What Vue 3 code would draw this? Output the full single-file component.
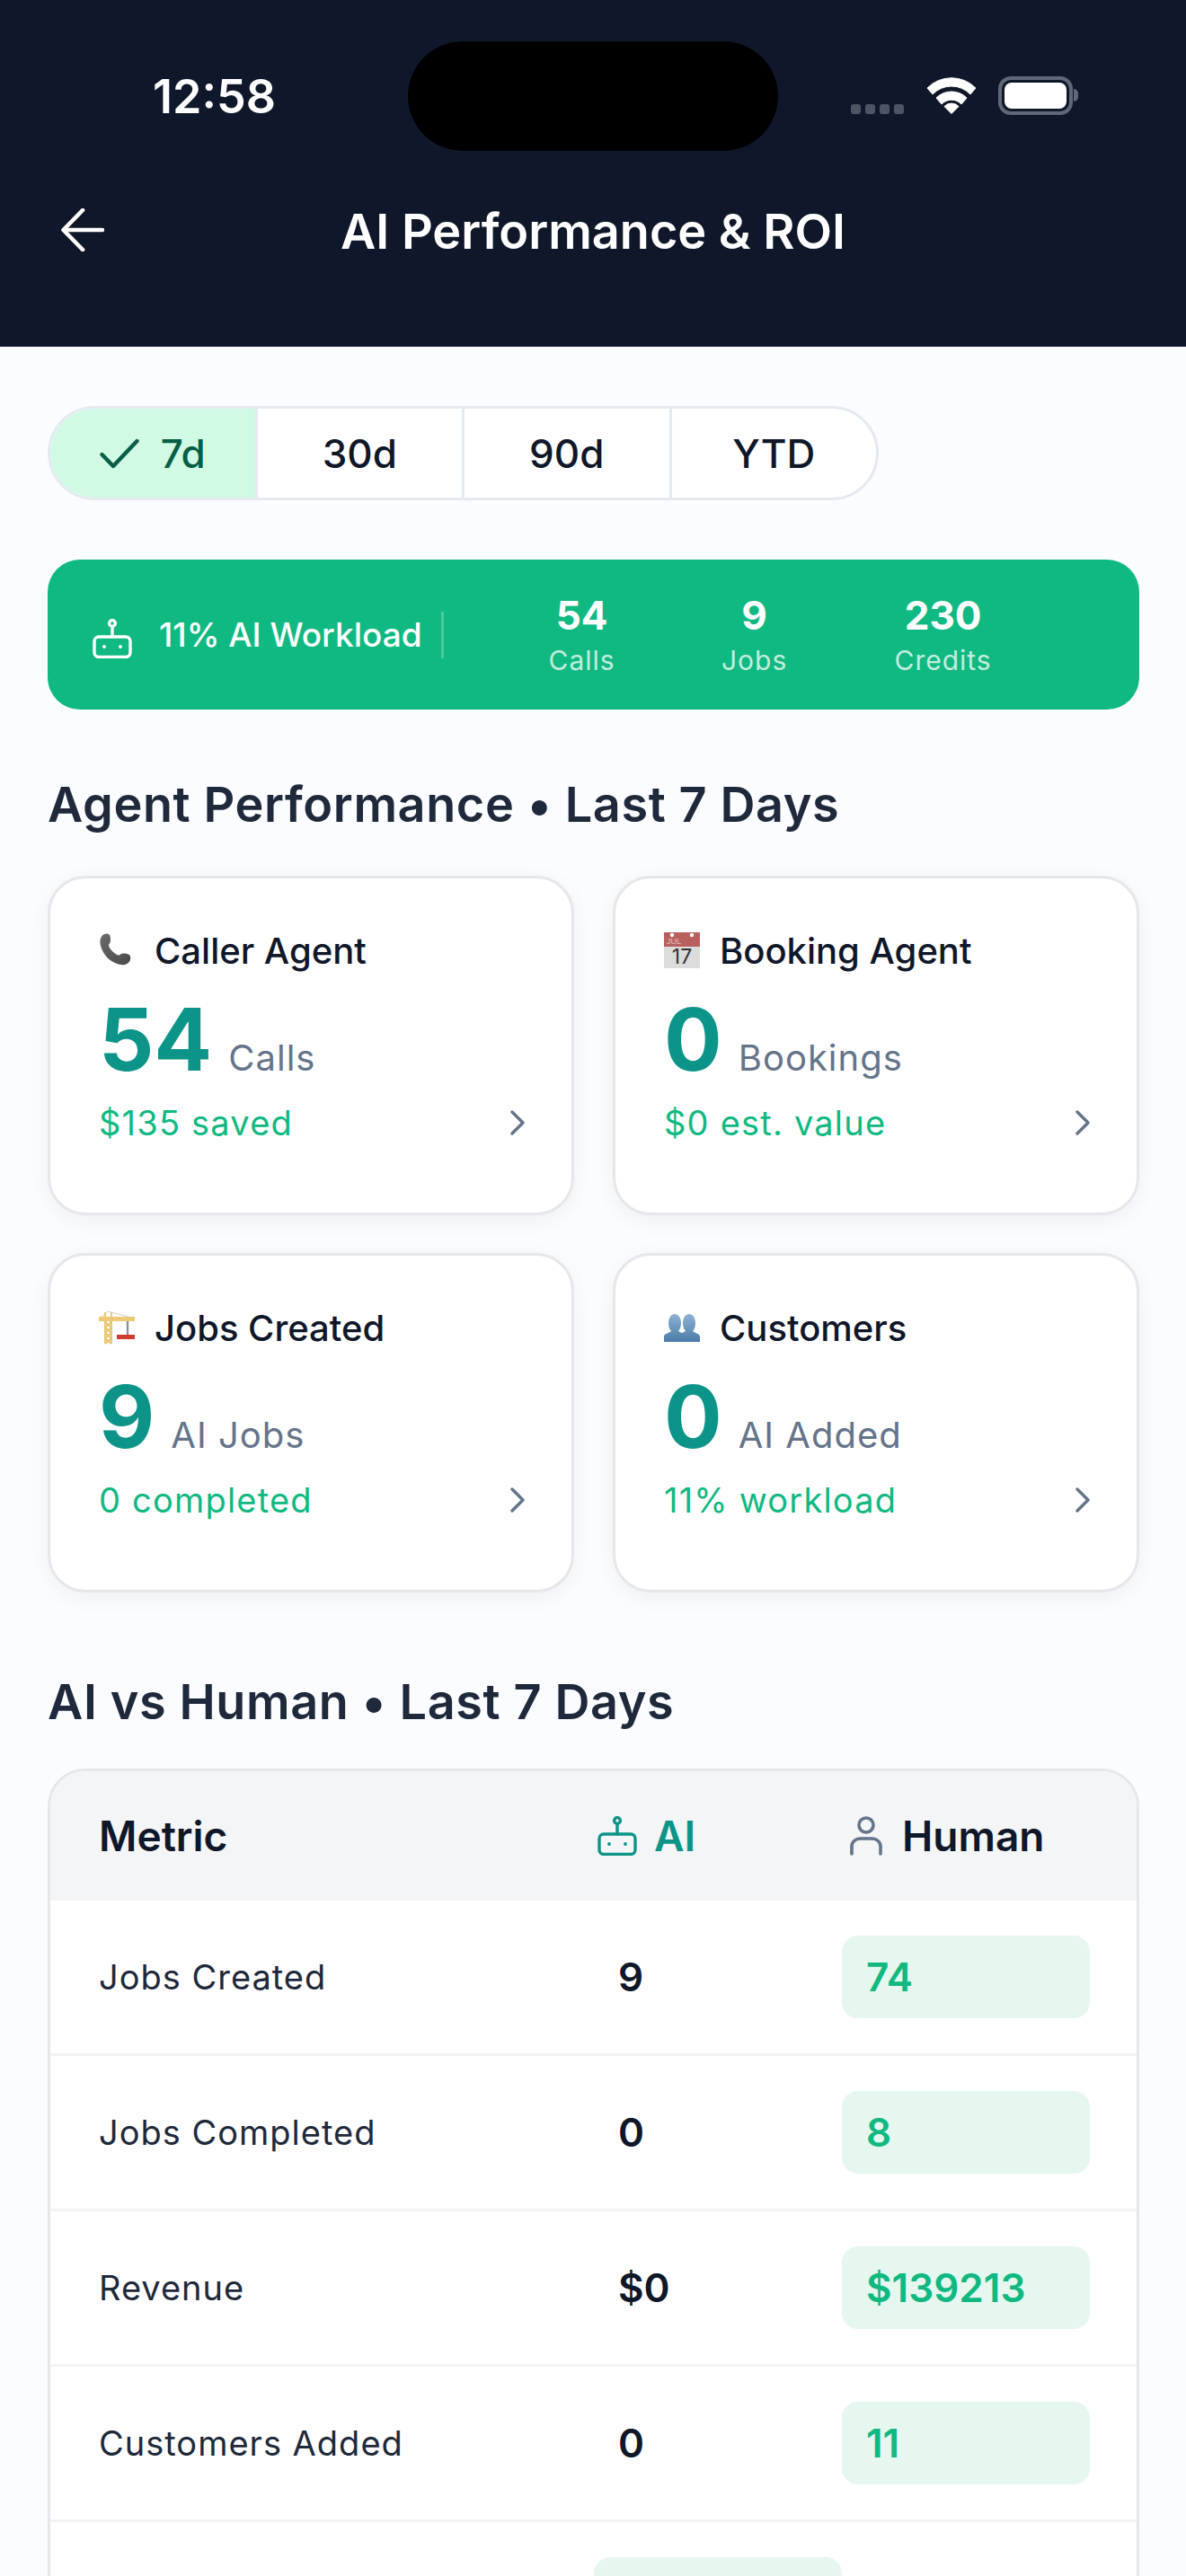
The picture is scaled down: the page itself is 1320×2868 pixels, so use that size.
<script setup>
const ranges = [
  { label: '7d', active: true },
  { label: '30d' },
  { label: '90d' },
  { label: 'YTD' },
]
const stats = [
  { value: '54', label: 'Calls', width: 'w1' },
  { value: '9', label: 'Jobs', width: 'w2' },
  { value: '230', label: 'Credits', width: 'w3' },
]
const cards = [
  { icon: 'phone', title: 'Caller Agent', value: '54', unit: 'Calls', note: '$135 saved' },
  { icon: 'calendar', title: 'Booking Agent', value: '0', unit: 'Bookings', note: '$0 est. value' },
  { icon: 'crane', title: 'Jobs Created', value: '9', unit: 'AI Jobs', note: '0 completed' },
  { icon: 'busts', title: 'Customers', value: '0', unit: 'AI Added', note: '11% workload' },
]
const rows = [
  { metric: 'Jobs Created', ai: '9', human: '74', win: 'human' },
  { metric: 'Jobs Completed', ai: '0', human: '8', win: 'human' },
  { metric: 'Revenue', ai: '$0', human: '$139213', win: 'human' },
  { metric: 'Customers Added', ai: '0', human: '11', win: 'human' },
  { metric: 'Calls Handled', ai: '54', human: '0', win: 'ai' },
]
</script>

<template>
  <div class="page">
    <header class="top">
      <div class="status">
        <span class="time">12:58</span>
        <div class="island"></div>
        <div class="status-icons">
          <div class="dots"><i></i><i></i><i></i><i></i></div>
          <svg class="wifi" viewBox="0 0 56 42" width="56" height="42">
            <path d="M1 13 A38 38 0 0 1 55 13 L49 20 A29 29 0 0 0 7 20 Z" fill="#fff" stroke="#fff" stroke-width="1" stroke-linejoin="round"/>
            <path d="M11 24 A24 24 0 0 1 45 24 L39 31 A15 15 0 0 0 17 31 Z" fill="#fff" stroke="#fff" stroke-width="1" stroke-linejoin="round"/>
            <path d="M20 33.5 A11 11 0 0 1 36 33.5 L28 41.5 Z" fill="#fff" stroke="#fff" stroke-width="1" stroke-linejoin="round"/>
          </svg>
          <div class="battery"><div class="battery-fill"></div><div class="battery-nub"></div></div>
        </div>
      </div>
      <div class="nav">
        <svg class="back" viewBox="0 0 48 48" width="48" height="48" fill="none" stroke="#fff" stroke-width="4.6" stroke-linecap="round" stroke-linejoin="round">
          <path d="M46 24H3"/><path d="M24 2 2.5 24 24 46"/>
        </svg>
        <h1>AI Performance &amp; ROI</h1>
      </div>
    </header>

    <main class="content">
      <div class="segments">
        <div v-for="r in ranges" :key="r.label" class="segment" :class="{ active: r.active }">
          <svg v-if="r.active" class="check" viewBox="0 0 44 34" width="44" height="34" fill="none" stroke="#065f46" stroke-width="4.4" stroke-linecap="round" stroke-linejoin="round">
            <path d="M2.5 18 15 31 41.5 3"/>
          </svg>
          <span>{{ r.label }}</span>
        </div>
      </div>

      <section class="banner">
        <div class="workload">
          <svg class="robot" viewBox="0 0 44 44" width="44" height="44" fill="none" stroke="#fff" stroke-width="3.4" stroke-linecap="round" stroke-linejoin="round">
            <circle cx="22" cy="5" r="3.4"/><path d="M22 8.5V20"/>
            <rect x="2" y="20" width="40" height="22.5" rx="5"/>
            <circle cx="13" cy="31" r="1.2" fill="#fff" stroke-width="1.4"/><circle cx="31" cy="31" r="1.2" fill="#fff" stroke-width="1.4"/>
          </svg>
          <span>11% AI Workload</span>
        </div>
        <div class="banner-rule"></div>
        <div class="stats">
          <div v-for="s in stats" :key="s.label" class="stat" :class="s.width">
            <strong>{{ s.value }}</strong>
            <small>{{ s.label }}</small>
          </div>
        </div>
      </section>

      <h2 class="heading first">Agent Performance • Last 7 Days</h2>
      <div class="cards">
        <article v-for="c in cards" :key="c.title" class="card">
          <div class="card-title">
            <svg v-if="c.icon === 'phone'" class="emoji" viewBox="0 0 40 40" width="40" height="40">
              <defs><linearGradient id="ph" x1="0" y1="0" x2="1" y2="1"><stop offset="0" stop-color="#6b6b6b"/><stop offset="1" stop-color="#4a4a4a"/></linearGradient></defs>
              <path d="M3 4.5C5 1.5 9.5 .5 11.5 2.5c1.6 1.6 2 6.5 1 9-.6 1.400-1.800 1.800-1.500 3.300 1 4 6.500 9.500 10.500 10.700 1.500.4 2-1 3.500-1.500 2.500-.9 7-.4 8.800 1.100 2.200 2 2 6.400-1 8.900-3 2.400-6.800 2.900-10.800 1.500C12 33 4.500 24.500 2 15 1 11.500 1 7.500 3 4.500Z" fill="url(#ph)"/>
            </svg>
            <svg v-else-if="c.icon === 'calendar'" class="emoji" viewBox="0 0 40 40" width="40" height="40">
              <rect x="0" y="0" width="40" height="40" fill="#dcdcdc"/>
              <rect x="0" y="0" width="40" height="16" fill="#b9605f"/>
              <circle cx="9" cy="3" r="2.200" fill="#fff"/><circle cx="31" cy="3" r="2.200" fill="#fff"/>
              <text x="3" y="13" class="cal-month">JUL</text>
              <text x="20" y="35" class="cal-day" text-anchor="middle">17</text>
            </svg>
            <svg v-else-if="c.icon === 'crane'" class="emoji" viewBox="0 0 40 40" width="40" height="40">
              <path d="M10 2 L3 8 M10 2 L33 8" stroke="#cfcfcf" stroke-width="1" fill="none"/>
              <g stroke="#e6c26a" stroke-width="1.800" fill="none">
                <path d="M7 3V38M14 3V38M7 8L14 14M14 8L7 14M7 14L14 20M14 14L7 20M7 20L14 26M14 20L7 26M7 26L14 32M14 26L7 32M7 32L14 38M14 32L7 38"/>
              </g>
              <path d="M0 8H40V13H0Z" fill="#ecca76"/>
              <path d="M32 13V28" stroke="#8a8f99" stroke-width="2.400"/>
              <rect x="24" y="28" width="20" height="5" transform="translate(-4 0)" fill="#cf3d2e"/>
            </svg>
            <svg v-else class="emoji" viewBox="0 0 40 32" width="40" height="32">
              <defs><linearGradient id="bu" x1="0" y1="0" x2="0" y2="1"><stop offset="0" stop-color="#8fb2d4"/><stop offset="1" stop-color="#4a7ba8"/></linearGradient></defs>
              <path d="M0 32V26c0-3 6-4 8-6-2-2-3-5-3-9 0-6 3-10 7-10s7 4 7 10c0 3.500-1 6.500-3 9 1 .8 2.200 1.400 4 2 1.800-.6 3-1.200 4-2-2-2.500-3-5.500-3-9 0-6 3-10 7-10s7 4 7 10c0 4-1 7-3 9 2 2 8 3 8 6v6Z" fill="url(#bu)"/>
            </svg>
            <span>{{ c.title }}</span>
          </div>
          <div class="card-value">
            <strong>{{ c.value }}</strong>
            <span>{{ c.unit }}</span>
          </div>
          <div class="card-foot">
            <span>{{ c.note }}</span>
            <svg viewBox="0 0 16 28" width="16" height="28" fill="none" stroke="#64748b" stroke-width="3.400" stroke-linecap="round" stroke-linejoin="round">
              <path d="M2 2 14 14 2 26"/>
            </svg>
          </div>
        </article>
      </div>

      <h2 class="heading second">AI vs Human • Last 7 Days</h2>
      <section class="table">
        <div class="thead">
          <div>Metric</div>
          <div class="th-ai">
            <svg viewBox="0 0 44 44" width="44" height="44" fill="none" stroke="#0d9488" stroke-width="3.400" stroke-linecap="round" stroke-linejoin="round">
              <circle cx="22" cy="5" r="3.400"/><path d="M22 8.500V20"/>
              <rect x="2" y="20" width="40" height="22.500" rx="5"/>
              <circle cx="13" cy="31" r="1.200" fill="#0d9488" stroke-width="1.400"/><circle cx="31" cy="31" r="1.200" fill="#0d9488" stroke-width="1.400"/>
            </svg>
            <span>AI</span>
          </div>
          <div class="th-human">
            <svg viewBox="0 0 36 44" width="36" height="44" fill="none" stroke="#64748b" stroke-width="3.600" stroke-linecap="round" stroke-linejoin="round">
              <circle cx="18" cy="10" r="8"/><path d="M2 42V34c0-6 5-9 9-9h14c4 0 9 3 9 9v8"/>
            </svg>
            <span>Human</span>
          </div>
        </div>
        <div v-for="r in rows" :key="r.metric" class="tr">
          <div class="metric">{{ r.metric }}</div>
          <div class="val" :class="{ win: r.win === 'ai' }">{{ r.ai }}</div>
          <div class="val" :class="{ win: r.win === 'human' }">{{ r.human }}</div>
        </div>
      </section>
    </main>
  </div>
</template>

<style>
html, body { margin: 0; background: #fafcff; }
</style>

<style scoped>
.page {
  width: 1320px;
  height: 2868px;
  overflow: hidden;
  background: #fafcff;
  font-family: Inter, "Liberation Sans", sans-serif;
  color: #0f172a;
}
.top {
  height: 386px;
  background: #0f172a;
  box-sizing: border-box;
  padding-top: 46px;
}
.status {
  display: flex;
  align-items: flex-start;
  height: 122px;
  padding-left: 170px;
}
.time {
  width: 284px;
  margin-top: 36px;
  font-size: 52px;
  line-height: 52px;
  font-weight: 600;
  color: #fff;
}
.island {
  width: 412px;
  height: 122px;
  border-radius: 61px;
  background: #000;
}
.status-icons {
  display: flex;
  align-items: flex-start;
  margin-left: 81px;
}
.dots {
  display: flex;
  gap: 5px;
  margin-top: 70px;
}
.dots i {
  width: 11px;
  height: 11px;
  border-radius: 3px;
  background: #4b5563;
}
.wifi { margin: 39px 0 0 25px; }
.battery {
  position: relative;
  box-sizing: border-box;
  width: 83px;
  height: 43px;
  margin: 39px 0 0 24px;
  padding: 3px;
  border: 4px solid #5f6878;
  border-radius: 14px;
}
.battery-fill {
  height: 100%;
  border-radius: 8px;
  background: #fff;
}
.battery-nub {
  position: absolute;
  right: -10px;
  top: 10px;
  width: 5px;
  height: 14px;
  border-radius: 0 5px 5px 0;
  background: #5f6878;
}
.nav {
  position: relative;
  display: flex;
  justify-content: center;
  align-items: center;
  height: 60px;
  margin-top: 60px;
}
.back {
  position: absolute;
  left: 68px;
  top: 4px;
}
h1 {
  margin: 0;
  font-size: 54px;
  line-height: 60px;
  font-weight: 600;
  color: #fff;
}
.content { padding: 66px 52px 0 53px; }
.segments {
  display: flex;
  width: 925px;
  height: 105px;
  box-sizing: border-box;
  border: 3px solid #e5e9f0;
  border-radius: 53px;
  overflow: hidden;
  background: #fff;
}
.segment {
  flex: 1;
  display: flex;
  align-items: center;
  justify-content: center;
  gap: 24px;
  font-size: 44px;
  font-weight: 500;
  color: #0f172a;
  border-left: 3px solid #e5e9f0;
}
.segment:first-child { border-left: 0; }
.segment.active {
  background: #d1fae5;
  color: #065f46;
}
.banner {
  display: flex;
  align-items: center;
  height: 167px;
  margin-top: 66px;
  padding-left: 50px;
  border-radius: 36px;
  background: #10b981;
  color: #fff;
}
.workload {
  display: flex;
  align-items: center;
  gap: 30px;
  font-size: 37px;
  font-weight: 500;
  white-space: nowrap;
}
.robot { margin-top: 8px; }
.banner-rule {
  width: 3px;
  height: 52px;
  margin-left: 21px;
  background: rgba(255, 255, 255, 0.25);
}
.stats {
  display: flex;
  margin-left: 50px;
}
.stat {
  display: flex;
  flex-direction: column;
  align-items: center;
  width: 208px;
}
.stat.w2 { width: 176px; }
.stat.w3 { width: 244px; }
.stat strong {
  font-size: 44px;
  line-height: 50px;
  font-weight: 700;
}
.stat small {
  margin-top: 7px;
  font-size: 30px;
  line-height: 36px;
  letter-spacing: 1px;
  color: rgba(255, 255, 255, 0.75);
}
.heading {
  margin: 0;
  font-size: 54px;
  line-height: 64px;
  font-weight: 600;
  letter-spacing: 0.6px;
  color: #1e293b;
}
.heading.first { margin-top: 74px; }
.heading.second { margin-top: 90px; }
.cards {
  display: grid;
  grid-template-columns: 586px 586px;
  column-gap: 43px;
  row-gap: 42px;
  margin-top: 47px;
}
.card {
  height: 378px;
  box-sizing: border-box;
  padding: 60px 52px 0 54px;
  border: 3px solid #e5e7eb;
  border-radius: 42px;
  background: #fff;
  box-shadow: 0 6px 24px rgba(15, 23, 42, 0.05);
}
.card-title {
  display: flex;
  align-items: center;
  gap: 22px;
  height: 40px;
  font-size: 40px;
  font-weight: 500;
  color: #0f172a;
}
.emoji { flex: none; }
.cal-month { font: 400 9px "Liberation Sans", sans-serif; fill: #e8c0bf; }
.cal-day { font: 400 23px Inter, sans-serif; fill: #333; }
.card-value {
  display: flex;
  align-items: baseline;
  gap: 18px;
  margin-top: 33px;
  height: 92px;
}
.card-value strong {
  font-size: 96px;
  line-height: 92px;
  font-weight: 700;
  color: #0d9488;
}
.card-value span {
  font-size: 40px;
  letter-spacing: 1px;
  color: #64748b;
}
.card-foot {
  display: flex;
  align-items: center;
  justify-content: space-between;
  margin-top: 24px;
  font-size: 38px;
  letter-spacing: 1.2px;
  color: #10b981;
}
.table {
  margin-top: 42px;
  border: 3px solid #e5e7eb;
  border-radius: 42px;
  background: #fff;
  overflow: hidden;
}
.thead, .tr {
  display: grid;
  grid-template-columns: 1fr 276px 276px;
  padding: 0 52px 0 54px;
  align-items: center;
}
.thead {
  height: 144px;
  background: #f3f5f7;
  font-size: 46px;
  font-weight: 600;
}
.th-ai, .th-human {
  display: flex;
  align-items: center;
}
.th-ai { gap: 19px; padding-left: 4px; color: #0d9488; }
.th-human { gap: 22px; padding-left: 9px; }
.tr {
  height: 170px;
  border-bottom: 3px solid #f1f3f5;
  box-sizing: content-box;
}
.metric {
  font-size: 38px;
  letter-spacing: 1px;
  color: #1e293b;
}
.val {
  display: flex;
  align-items: center;
  height: 92px;
  padding-left: 27px;
  border-radius: 18px;
  font-size: 44px;
  font-weight: 600;
}
.val.win {
  background: #e6f7ef;
  color: #10b981;
}
</style>
